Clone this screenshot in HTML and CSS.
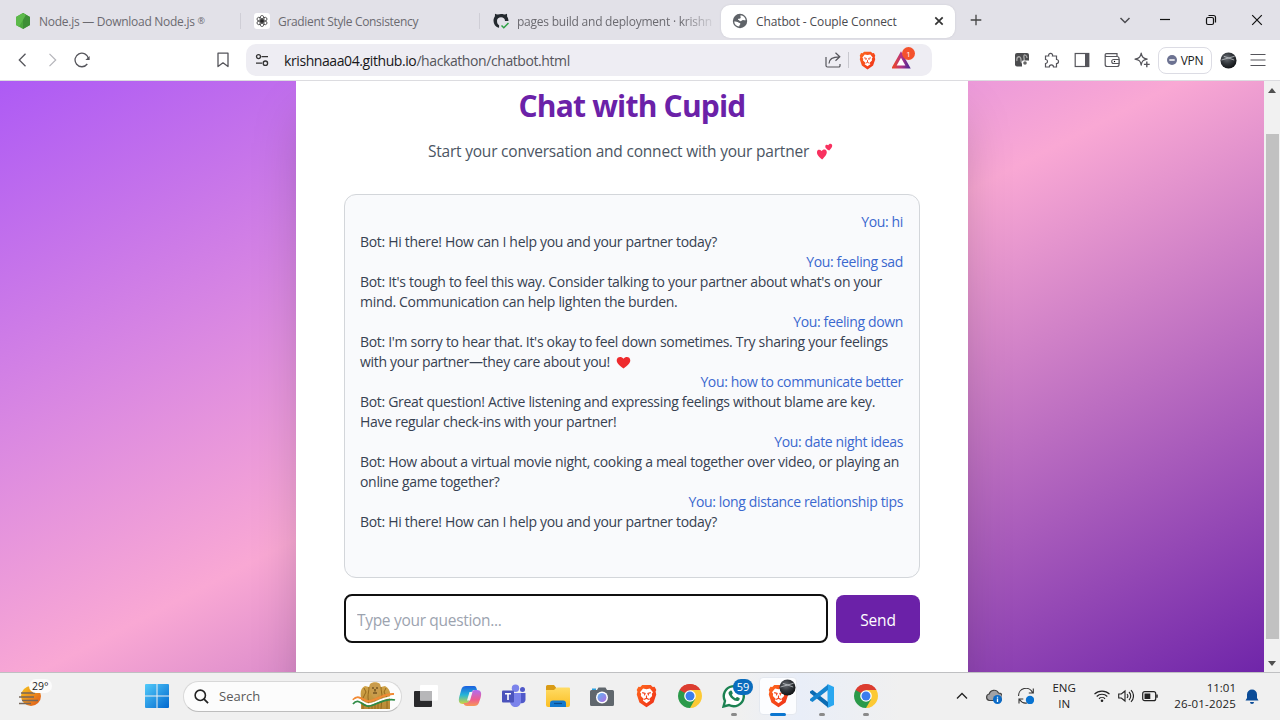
FILE: index.html
```
<!DOCTYPE html>
<html lang="en">
<head>
<meta charset="utf-8">
<title>Chatbot - Couple Connect</title>
<link rel="stylesheet" href="styles.css">
</head>
<body>
<svg class="defs" width="0" height="0" aria-hidden="true">
  <defs>
    <linearGradient id="fire" x1="0" y1="0" x2="1" y2="1"><stop offset="0" stop-color="#ff6a1f"/><stop offset="1" stop-color="#ee2d18"/></linearGradient>
    <linearGradient id="win" x1="0" y1="0" x2="1" y2="1"><stop offset="0" stop-color="#53cbfa"/><stop offset="1" stop-color="#0067cf"/></linearGradient>
    <linearGradient id="sun" x1="0" y1="0" x2="1" y2="1"><stop offset="0" stop-color="#f7c51e"/><stop offset="1" stop-color="#e0561a"/></linearGradient>
    <linearGradient id="cpA" x1="0" y1="0" x2="0" y2="1"><stop offset="0" stop-color="#1b5fe0"/><stop offset=".5" stop-color="#25b6d8"/><stop offset="1" stop-color="#d3d63a"/></linearGradient>
    <linearGradient id="cpB" x1="0" y1="0" x2="0" y2="1"><stop offset="0" stop-color="#b06cf0"/><stop offset=".6" stop-color="#ee5d8f"/><stop offset="1" stop-color="#f79a55"/></linearGradient>
    <linearGradient id="folder" x1="0" y1="0" x2="0" y2="1"><stop offset="0" stop-color="#ffdc65"/><stop offset="1" stop-color="#fbbf24"/></linearGradient>
    <linearGradient id="gold" x1="0" y1="0" x2="0" y2="1"><stop offset="0" stop-color="#d5a84c"/><stop offset="1" stop-color="#b88a35"/></linearGradient>
    <linearGradient id="tri" x1="0" y1="0" x2="1" y2="0"><stop offset="0" stop-color="#e8442e"/><stop offset=".55" stop-color="#b0338a"/><stop offset="1" stop-color="#5b2a92"/></linearGradient>
    <linearGradient id="lens" x1="0" y1="0" x2="1" y2="1"><stop offset="0" stop-color="#5fb6f2"/><stop offset="1" stop-color="#b06be0"/></linearGradient>
    <radialGradient id="orb" cx=".4" cy=".35" r=".7"><stop offset="0" stop-color="#6c7177"/><stop offset=".5" stop-color="#33373c"/><stop offset="1" stop-color="#0d0f11"/></radialGradient>
    <symbol id="brave" viewBox="0 0 22 25">
      <path d="M6.500 1h9l2 2 2-.3 1.800 3.600-.8 1.600.7 3.100-2.800 8.200L11 24.300l-7.400-5.100L.8 11l.7-3.100L.7 6.300 2.500 2.700l2 .3z" fill="url(#fire)"/>
      <path d="M11 5.300l3.600-.7 3.200 4-1.200 1.600.3 2.200-3.100 3.200 1 1.700L11 20l-3.800-2.700 1-1.700-3.100-3.200.3-2.200-1.200-1.600 3.200-4z" fill="#fff"/>
      <path d="M6.500 9l3 .7-.7 2.200M15.500 9l-3 .7.7 2.200M11 12v3M8.500 16.200l2.500-1.400 2.500 1.400" fill="none" stroke="#f2421b" stroke-width="1.200"/>
    </symbol>
    <symbol id="chrome" viewBox="0 0 24 24">
      <path d="M12 12L1.610 6A12 12 0 0 1 22.390 6z" fill="#dc3d30"/>
      <path d="M12 12L22.390 6A12 12 0 0 1 12 24z" fill="#fcc934"/>
      <path d="M12 12L12 24A12 12 0 0 1 1.610 6z" fill="#2b9a4a"/>
      <path d="M12 6h10.390L17.200 15z" fill="#fcc934"/>
      <path d="M6.800 15L1.610 6 12 6z" fill="#2b9a4a"/>
      <path d="M17.200 15L12 24 6.800 15z" fill="#2b9a4a"/>
      <path d="M1.610 6A12 12 0 0 1 22.390 6H12L6.800 9z" fill="#dc3d30"/>
      <circle cx="12" cy="12" r="5.800" fill="#fff"/><circle cx="12" cy="12" r="4.500" fill="#3b7ded"/>
    </symbol>
    <symbol id="orbit" viewBox="0 0 18 18">
      <circle cx="9" cy="9" r="8.500" fill="url(#orb)"/>
      <path d="M1.500 8.500L15.500 4.500M4 4.500l11 4" stroke="#c4c8cc" stroke-width=".8" fill="none"/>
    </symbol>
  </defs>
</svg>

<header class="tabs">
  <div class="tab">
    <svg class="fav" viewBox="0 0 16 16"><path d="M8 0l7 4v8l-7 4-7-4V4z" fill="#4aa63c"/><path d="M8 0l7 4v8l-7 4z" fill="#3d8f36"/><path d="M11 1.700L4 13.700 1 12V4l7-4z" fill="#5cb94a"/></svg>
    <span class="tab-text t-node">Node.js — Download Node.js <span class="reg">®</span></span>
  </div>
  <div class="tab divided">
    <svg class="fav" viewBox="0 0 16 16"><rect width="16" height="16" rx="3" fill="#fff"/><g fill="none" stroke="#222" stroke-width=".7"><ellipse cx="8" cy="5.600" rx="2" ry="3.200"/><ellipse cx="8" cy="5.600" rx="2" ry="3.200" transform="rotate(60 8 8)"/><ellipse cx="8" cy="5.600" rx="2" ry="3.200" transform="rotate(120 8 8)"/><ellipse cx="8" cy="5.600" rx="2" ry="3.200" transform="rotate(180 8 8)"/><ellipse cx="8" cy="5.600" rx="2" ry="3.200" transform="rotate(240 8 8)"/><ellipse cx="8" cy="5.600" rx="2" ry="3.200" transform="rotate(300 8 8)"/></g></svg>
    <span class="tab-text t-grad">Gradient Style Consistency</span>
  </div>
  <div class="tab divided">
    <svg class="fav" viewBox="0 0 16 16"><path d="M8 1C3.600 1 .5 3.800.5 7.700c0 3.300 2 6 5 7.100.4.100.6-.2.600-.5v-2c-1.200-.2-2.100-2-2.100-4.500C4 5.500 5.800 4.300 8 4.300s4 1.200 4 3.700h3.500C15.500 3.700 12.400 1 8 1z" fill="#24292f"/><path d="M1.800 5.500L2 .8l4 1.500zM14.200 5.500L14 .8l-4 1.500z" fill="#24292f"/><path d="M2.500 11c1.500.3 1.500 1.500 3 1.500" stroke="#24292f" stroke-width="1.300" fill="none"/><path d="M8.500 12.500l2.300 2.300 4.700-4.800" fill="none" stroke="#2da044" stroke-width="1.500"/></svg>
    <span class="tab-text faded">pages build and deployment · krishn</span>
  </div>
  <div class="tab active">
    <svg class="fav" viewBox="0 0 16 16"><circle cx="8" cy="8" r="7.200" fill="#5f6368"/><path d="M8.700 2.200c2.600.2 4.700 2.300 5 5-1 .4-1.600-.2-2.600-.2-1.500.1-1.500 1.300-2.800 1.300-.8-.2-.8-1.300-1.800-1.400-.6-.1-.8-.8-.1-1.200 1.200-.3 2.200-.2 2.300-1.300-.1-.9-.5-1.500 0-2.200zM2.200 8.500c1.500 0 3.200.2 4.200 1.100.7.700 1.800.3 2 1.200.1.900-1.100 1.100-1.200 2.800-2.800-.2-4.900-2.300-5-5.100z" fill="#fff"/></svg>
    <span class="tab-text">Chatbot - Couple Connect</span>
    <svg class="tab-close" viewBox="0 0 10 10"><path d="M1.300 1.300l7.400 7.400M8.700 1.300L1.300 8.700" stroke="#333" stroke-width="1.700"/></svg>
  </div>
  <svg class="plus" viewBox="0 0 12 12"><path d="M6 .7v10.600M.7 6h10.600" stroke="#444" stroke-width="1.300"/></svg>
  <div class="window-buttons">
    <svg viewBox="0 0 14 14"><path d="M2.500 5l4.500 4.500L11.500 5" fill="none" stroke="#4c4c50" stroke-width="1.500"/></svg>
    <svg viewBox="0 0 14 14"><path d="M2 6.500h10" stroke="#111" stroke-width="1.200"/></svg>
    <svg viewBox="0 0 14 14"><rect x="2.500" y="4.500" width="7" height="7" rx="1.500" fill="none" stroke="#111" stroke-width="1.200"/><path d="M4.500 2.500h5a2 2 0 0 1 2 2v5" fill="none" stroke="#111" stroke-width="1.200"/></svg>
    <svg viewBox="0 0 14 14"><path d="M2.200 2.200l9.600 9.600M11.800 2.200l-9.600 9.600" stroke="#111" stroke-width="1.200"/></svg>
  </div>
</header>

<nav class="toolbar">
  <div class="nav-left">
    <svg viewBox="0 0 16 16"><path d="M11.500 1.800L5.300 8l6.200 6.200" fill="none" stroke="#55555b" stroke-width="1.300"/></svg>
    <svg viewBox="0 0 16 16"><path d="M5.500 1.800L11.700 8l-6.200 6.200" fill="none" stroke="#b5b5ba" stroke-width="1.200"/></svg>
    <svg viewBox="0 0 16 16"><path d="M13.300 12A6.800 6.800 0 1 1 14.500 6.500" fill="none" stroke="#55555b" stroke-width="1.300"/><path d="M15.600 4v4h-4.200z" fill="#55555b"/></svg>
  </div>
  <svg class="bookmark" viewBox="0 0 16 16"><path d="M3 1.200h10v13.300L8 10.800l-5 3.700z" fill="none" stroke="#55555b" stroke-width="1.300" stroke-linejoin="round"/></svg>
  <div class="address">
    <svg class="tune" viewBox="0 0 14 14"><g fill="none" stroke="#333" stroke-width="1.300"><circle cx="3.500" cy="3.600" r="2"/><path d="M6.500 3.600H13M1 10.200h6.200"/><circle cx="10.400" cy="10.200" r="2.200"/></g></svg>
    <span class="url"><span class="host">krishnaaa04.github.io</span>/hackathon/chatbot.html</span>
    <svg class="share" viewBox="0 0 16 16"><path d="M1 5v8.500a1.500 1.500 0 0 0 1.500 1.500h11.300a1.200 1.200 0 0 0 1.200-1.200V12M4 11.500C4 7 7 4.800 14.500 4.800M10.500.8l4.300 4-4.300 4" fill="none" stroke="#55555b" stroke-width="1.200"/></svg>
    <span class="rule"></span>
    <svg class="shield" viewBox="0 0 22 25"><use href="#brave"/></svg>
    <span class="rewards"><svg viewBox="0 0 20 18"><path d="M9 3.500l7 12.500H2z" fill="#fff" stroke="url(#tri)" stroke-width="3.200"/></svg><b>1</b></span>
  </div>
  <div class="extensions">
    <svg viewBox="0 0 16 16"><rect x="1" y="1" width="14" height="13.500" rx="2" fill="#4b4c4e"/><path d="M3 9c-1-5 4-6 4-1s4 3 3-2 3-3 3 0" stroke="#aaa" stroke-width="1.300" fill="none"/><rect x="8" y="8.500" width="7.500" height="7" rx="1" fill="#fff"/><circle cx="11" cy="11" r="1.800" fill="#666"/></svg>
    <svg viewBox="0 0 16 16"><path d="M1.500 4h3.200a2 2 0 1 1 3.800 0h4v3.500a2 2 0 1 1 0 4V15H9.500a2.100 2.100 0 1 0-4.200 0H1.500v-3.500a2 2 0 1 0 0-4z" fill="none" stroke="#55555b" stroke-width="1.200"/></svg>
    <svg viewBox="0 0 16 16"><rect x="1.200" y="1.500" width="13.600" height="13" fill="none" stroke="#55555b" stroke-width="1.200"/><path d="M11 1.500h4v13h-4z" fill="#55555b"/></svg>
    <svg viewBox="0 0 16 16"><path d="M1.200 3.200v9.300a2 2 0 0 0 2 2h9.800a2 2 0 0 0 2-2v-6a2 2 0 0 0-2-2H2.500a1.400 1.400 0 0 1 0-2.800H13V4.500" fill="none" stroke="#55555b" stroke-width="1.200"/><path d="M15 7.500H9.700a2 2 0 0 0 0 4H15z" fill="#fff" stroke="#55555b" stroke-width="1.100"/><circle cx="10.500" cy="9.500" r=".7"/></svg>
    <svg viewBox="0 0 16 16"><path d="M7.200 1.200c.7 3.800 1.800 5 6 5.900-4.200.8-5.300 2-6 6-.7-4-1.800-5.200-6.200-6 4.400-.9 5.500-2.100 6.200-5.900z" fill="none" stroke="#55555b" stroke-width="1.200" stroke-linejoin="round"/><path d="M12.800 9.500v5.800M9.900 12.400h5.800" stroke="#55555b" stroke-width="1.400"/></svg>
  </div>
  <div class="vpn"><svg viewBox="0 0 10 10"><circle cx="5" cy="5" r="5" fill="#6c7291"/><path d="M2.300 5h5.400" stroke="#fff" stroke-width="1.500"/></svg><span>VPN</span></div>
  <svg class="profile" viewBox="0 0 18 18"><use href="#orbit"/></svg>
  <svg class="menu" viewBox="0 0 16 16"><path d="M.5 2.500h15M.5 8h15M.5 13.500h15" stroke="#55555b" stroke-width="1.200"/></svg>
</nav>

<div class="viewport">
  <main class="page">
    <section class="card">
      <h1><span>Chat with Cupid</span></h1>
      <p class="lead"><span>Start your conversation and connect with your partner</span><svg viewBox="0 0 18 18"><path d="M6.500 17.500C3 14.500.300 12 1.200 8.800c.8-2 3.300-2 4.600-.2 1.300-1.800 4-2.500 5.300-.4 1.300 3.300-1.600 6-4.600 9.300z" fill="#f8315f"/><path d="M14 8c-2.500-1.200-4.500-2.700-4.200-4.800.4-1.500 2.200-1.800 3.200-.7.500-1.600 2.700-2.400 3.800-.9C18 3.500 16 6 14 8z" fill="#f8315f"/></svg></p>
      <div class="chat">
        <p class="you">You: hi</p>
        <p class="bot">Bot: Hi there! How can I help you and your partner today?</p>
        <p class="you">You: feeling sad</p>
        <p class="bot">Bot: It's tough to feel this way. Consider talking to your partner about what's on your<br>mind. Communication can help lighten the burden.</p>
        <p class="you">You: feeling down</p>
        <p class="bot">Bot: I'm sorry to hear that. It's okay to feel down sometimes. Try sharing your feelings<br>with your partner—they care about you!<svg viewBox="0 0 16 14"><path d="M8 13.500C4 10.500.7 8 .7 4.500.7.600 5.800-.300 8 2.900c2.200-3.200 7.300-2.300 7.300 1.600 0 3.500-3.300 6-7.300 9z" fill="#ee2b2e"/></svg></p>
        <p class="you">You: how to communicate better</p>
        <p class="bot">Bot: Great question! Active listening and expressing feelings without blame are key.<br>Have regular check-ins with your partner!</p>
        <p class="you">You: date night ideas</p>
        <p class="bot">Bot: How about a virtual movie night, cooking a meal together over video, or playing an<br>online game together?</p>
        <p class="you">You: long distance relationship tips</p>
        <p class="bot">Bot: Hi there! How can I help you and your partner today?</p>
      </div>
      <form class="composer">
        <input type="text" placeholder="Type your question...">
        <button type="button">Send</button>
      </form>
    </section>
  </main>
  <aside class="scrollbar">
    <svg viewBox="0 0 8 5"><path d="M4 0l4 5H0z" fill="#505050"/></svg>
    <div class="thumb"></div>
    <svg viewBox="0 0 8 5"><path d="M4 5L0 0h8z" fill="#505050"/></svg>
  </aside>
</div>

<footer class="taskbar">
  <div class="weather">
    <svg viewBox="0 0 24 22"><circle cx="12" cy="11" r="10" fill="url(#sun)"/><path d="M2 8h14M0 12h15M3 15.500h16M0 18.500h12" stroke="#77675a" stroke-width="1.500"/></svg>
    <span>29°</span>
  </div>
  <svg class="start" viewBox="0 0 24 24"><path d="M0 1a1 1 0 0 1 1-1h10.500v11.500H0zM12.500 0H23a1 1 0 0 1 1 1v10.500H12.500zM0 12.500h11.500V24H1a1 1 0 0 1-1-1zM12.500 12.500H24V23a1 1 0 0 1-1 1H12.500z" fill="url(#win)"/></svg>
  <div class="search">
    <svg class="glass" viewBox="0 0 16 16"><circle cx="6.700" cy="6.700" r="5.500" fill="none" stroke="#222" stroke-width="1.700"/><path d="M10.700 10.700l4.300 4.300" stroke="#222" stroke-width="1.900"/></svg>
    <span>Search</span>
    <svg class="emblem" viewBox="0 0 44 28"><path d="M9 27V15c-1-5 0-9 4-11l4 1 1-3c2-2.500 8-2.500 10 0l1 3 4-1c4 2 6 6 5 11v12z" fill="url(#gold)"/><path d="M17 5c0 4-1 6-1 10l1 12M29 5c0 4 1 6 1 10l-1 12M12 6l2 4-3 6v11M34 6l-2 4 3 6v11M20 18v9M26 18v9M23 17v10" fill="none" stroke="#96691d" stroke-width="1"/><path d="M18 3c0 6 1 12 5 13 4-1 5-7 5-13-2-3-8-3-10 0z" fill="#c99c4c"/><path d="M20 6h2M24 6h2M21 11h4M23 7v2.500" stroke="#4d330d" stroke-width="1.100"/><path d="M1 18c5-6 8-1 14 1s16-8 27-7" fill="none" stroke="#f28a35" stroke-width="2"/><path d="M1 20c5-6 8 0 14 2s16-8 28-7" fill="none" stroke="#fff" stroke-width="2"/><path d="M1 22c5-6 8 0 14 2s16-9 28-6" fill="none" stroke="#2f8b46" stroke-width="1.800"/></svg>
  </div>
  <div class="apps">
    <span class="app"><svg viewBox="0 0 24 24"><rect x="0" y="7" width="18" height="16" rx="1" fill="#29292b"/><rect x="6" y="1" width="18" height="15.500" rx="1" fill="#fff"/><path d="M6 7h12v9.500H6z" fill="#b7b7b9"/></svg></span>
    <span class="app"><svg viewBox="0 0 24 24"><path d="M8 2h8c2 0 2.500 2 3 4h-2c-3 0-3.500 2-4 4l-2 7c-.5 2-1.500 3-3 3H5C1 20 0 17 1.500 12l2-7C4.200 3 5.500 2 8 2z" fill="url(#cpA)"/><path d="M16 22H9c-2 0-3-1-3.500-3H8c2 0 3-1.500 3.500-3.500l2-6.500c.6-2 1.500-3 3.500-3h2c4 0 5 3 3.500 8l-1.700 5c-.8 2-2 3-4.800 3z" fill="url(#cpB)"/><path d="M11.500 8h3l-2.500 8.500H9z" fill="#f1f1f2"/></svg></span>
    <span class="app"><svg viewBox="0 0 24 24"><circle cx="20.500" cy="5.500" r="2.500" fill="#5059c9"/><circle cx="13.500" cy="4.200" r="3.700" fill="#7b83eb"/><path d="M17 9h6.500v6.500c0 3-2.500 4.500-5.500 3.500z" fill="#5059c9"/><path d="M8 9h11v8c0 8-11 8-11 0z" fill="#7b83eb"/><rect x="0" y="6.500" width="12" height="12" rx="1" fill="#4b53bc"/><path d="M3 9.700h6M6 9.700v6.300" stroke="#fff" stroke-width="1.600"/></svg></span>
    <span class="app"><svg viewBox="0 0 24 24"><path d="M0 2.500A1.500 1.500 0 0 1 1.500 1H8l2 2.500V8H0z" fill="#d99b15"/><path d="M0 6h8l2.500-2.500H23a1 1 0 0 1 1 1V21a2 2 0 0 1-2 2H2a2 2 0 0 1-2-2z" fill="url(#folder)"/><path d="M4 23v-3.500a3 3 0 0 1 3-3h10a3 3 0 0 1 3 3V23z" fill="#1379ce"/><path d="M8 19.500h8" stroke="#0a4c8d" stroke-width="1.200"/></svg></span>
    <span class="app"><svg viewBox="0 0 24 24"><path d="M7 6l1.500-2.500h7L17 6h5.500A1.500 1.500 0 0 1 24 7.500v13a1.500 1.500 0 0 1-1.500 1.500h-21A1.500 1.500 0 0 1 0 20.500v-13A1.500 1.500 0 0 1 1.500 6z" fill="#60676d"/><path d="M2 4.500h4V6H2z" fill="#28a0df"/><circle cx="12" cy="13.500" r="6" fill="#fff"/><circle cx="12" cy="13.500" r="4.500" fill="url(#lens)"/></svg></span>
    <span class="app"><svg class="lion" viewBox="0 0 22 25"><use href="#brave"/></svg></span>
    <span class="app"><svg viewBox="0 0 24 24"><use href="#chrome"/></svg></span>
    <span class="app running"><svg viewBox="0 0 24 24"><path d="M1.500 22.500L3 17A10 10 0 1 1 7 21z" fill="#fff" stroke="#1c8252" stroke-width="2.400"/><path d="M8 7c1-.7 1.700-.5 2 .3l.7 1.700c.2.800-.7 1.300-.9 1.800.8 1.600 2 2.700 3.700 3.400.7-.4 1-1.500 1.700-1.300l2.300 1c.5.400.1 2.300-1 2.900-3.200 1.500-9-3-10-7.500C6.400 8.500 7 7.500 8 7z" fill="#1c8252"/></svg><b class="count">59</b></span>
    <span class="app current running"><svg class="lion" viewBox="0 0 22 25"><use href="#brave"/></svg><svg class="overlay" viewBox="0 0 18 18"><use href="#orbit"/></svg></span>
    <span class="app running"><svg viewBox="0 0 24 24"><path d="M17.500 0L24 3v18l-6.500 3z" fill="#2aa7f0"/><path d="M0 7.500L2.500 6 18 18v5.500L0 9z" fill="#0a6bb3"/><path d="M0 16.500L2.500 18 18 6V.5L0 15z" fill="#1584cf"/></svg></span>
    <span class="app running"><svg viewBox="0 0 24 24"><use href="#chrome"/></svg></span>
  </div>
  <div class="tray">
    <svg viewBox="0 0 16 16"><path d="M3 10.500L8 5.500l5 5" fill="none" stroke="#222" stroke-width="1.300"/></svg>
    <svg viewBox="0 0 16 16"><path d="M3.500 12.500a3.300 3.300 0 0 1-.3-6.500A5 5 0 0 1 12.500 5a4 4 0 0 1 2 7.500z" fill="#a2a2a5" stroke="#444" stroke-width="1.200"/><circle cx="11.500" cy="11.500" r="4.500" fill="#0b6bc7"/><path d="M11.500 8.700v1.100M11.500 10.600v3.400" stroke="#fff" stroke-width="1.300"/></svg>
    <svg viewBox="0 0 16 16"><path d="M.6 8A7.300 7.300 0 0 1 14.500 4.500M15.300.5V5h-4.500M9 15c-3 .6-5.500-.7-7.400-3.300M1 15.500V11h4.300" fill="none" stroke="#333" stroke-width="1.100"/><circle cx="12" cy="12" r="4.200" fill="#0873d1"/></svg>
    <span class="lang">ENG<br>IN</span>
    <svg viewBox="0 0 16 16"><path d="M.5 6.200a10.500 10.500 0 0 1 15 0M2.700 8.500a7.400 7.400 0 0 1 10.600 0M5 10.700a4.300 4.300 0 0 1 6 0" fill="none" stroke="#222" stroke-width="1.200"/><circle cx="8" cy="12.800" r="1.300" fill="#222"/></svg>
    <svg viewBox="0 0 16 16"><path d="M.7 6v4h2.600L7 13V3L3.300 6zM9 6a3 3 0 0 1 0 4M11 4a5.500 5.500 0 0 1 0 8M13 2.200a8 8 0 0 1 0 11.600" fill="none" stroke="#222" stroke-width="1.100"/></svg>
    <svg viewBox="0 0 16 16"><rect x=".7" y="3.700" width="13" height="9" rx="2" fill="none" stroke="#222" stroke-width="1.200"/><rect x="2.500" y="5.500" width="5.800" height="5.500" fill="#222"/><path d="M15 6.500v3.300" stroke="#222" stroke-width="1.500"/></svg>
    <span class="clock">11:01<br><span class="date">26-01-2025</span></span>
    <svg class="bell" viewBox="0 0 16 16"><path d="M1.500 12.500L3 10V6.500a5 5 0 0 1 10 0V10l1.500 2.500z" fill="#0b4c98"/><path d="M6 14a2 2 0 0 0 4 0z" fill="#0b4c98"/></svg>
  </div>
</footer>
</body>
</html>
```
FILE: styles.css
```
* { box-sizing: border-box; }
body {
  margin: 0; width: 1280px; height: 720px; overflow: hidden;
  display: grid; grid-template-rows: 40px 41px 591px 48px;
  font-family: "Open Sans", "Noto Sans", sans-serif;
  background: #fff; color: #222;
}
svg { display: block; flex: none; }
.defs { position: absolute; }
p, h1 { margin: 0; }

.tabs { display: flex; align-items: center; background: #e2e1e8; }
.tab { width: 240px; height: 33px; display: flex; align-items: center; padding-left: 15px; gap: 8px; margin-top: 2px; }
.divided { width: 239px; border-left: 1px solid #cfced6; height: 16px; padding-left: 13px; }
.divided + .divided { width: 242px; }
.fav { width: 16px; height: 16px; }
.tab-text { font-size: 12px; color: #6b6a70; white-space: nowrap; letter-spacing: -.12px; }
.t-node { letter-spacing: -.27px; }
.t-grad { letter-spacing: -.33px; }
.reg { font-size: 9px; vertical-align: 2px; }
.faded { letter-spacing: -.23px; mask-image: linear-gradient(90deg, #000 84%, rgba(0, 0, 0, .15)); }
.active { width: 234px; background: #fff; border-radius: 9px; padding: 0 11px; box-shadow: 0 0 2px #c9c8d0; }
.active .tab-text { color: #4a4a4f; }
.tab-close { width: 10px; height: 10px; margin-left: auto; }
.plus { width: 12px; height: 12px; margin-left: 15px; }
.window-buttons { display: flex; margin-left: auto; padding-right: 16px; }
.window-buttons svg { width: 14px; height: 14px; margin-left: 32px; }
.window-buttons svg:nth-child(2) { margin-left: 26px; }

.toolbar { display: flex; align-items: center; border-bottom: 1px solid #dcdce0; background: #fff; padding-left: 14px; }
.nav-left { display: flex; gap: 14px; }
.nav-left svg, .bookmark { width: 16px; height: 16px; }
.bookmark { margin-left: 125px; }
.address { width: 686px; height: 32px; margin-left: 15px; border-radius: 10px; background: #eeedf3; display: flex; align-items: center; padding-left: 9px; }
.tune { width: 14px; height: 14px; }
.url { font-size: 14px; margin-left: 15px; color: #55555b; width: 532px; white-space: nowrap; letter-spacing: -.41px; margin-right: 9px; }
.host { color: #17171a; }
.share { width: 16px; height: 16px; }
.rule { width: 1px; height: 16px; background: #c8c8cf; margin: 0 10px 0 7px; }
.shield { width: 17px; height: 19px; }
.rewards { position: relative; margin-left: 16px; }
.rewards svg { width: 20px; height: 18px; }
.rewards b { position: absolute; left: 10px; top: -4px; width: 13px; height: 13px; border-radius: 7px; background: #f4512c; color: #fff; font: 8px/13px "Open Sans", sans-serif; text-align: center; }
.extensions { display: flex; gap: 14px; margin-left: 82px; }
.extensions svg, .menu { width: 16px; height: 16px; }
.vpn { display: flex; align-items: center; justify-content: center; gap: 4px; width: 54px; height: 27px; margin-left: 8px; border: 1px solid #dcdce4; border-radius: 8px; font-size: 12px; letter-spacing: -.3px; }
.vpn svg { width: 10px; height: 10px; }
.profile { width: 17px; height: 17px; margin: 0 13px 0 8px; }

.viewport { display: flex; overflow: hidden; }
.page {
  width: 1264px; display: flex; justify-content: center;
  background: linear-gradient(to bottom right, #a855f7, #f9a8d4, #6b21a8) 0 -43px / 1264px 654px no-repeat;
}
.card { width: 672px; background: #fff; padding: 5px 48px 0; box-shadow: 0 25px 50px -12px rgba(0, 0, 0, .25); height: 620px; }
h1 { font-size: 30px; line-height: 40px; font-weight: 700; color: #6b21a8; text-align: center; letter-spacing: -.8px; }
.lead { display: flex; justify-content: center; align-items: center; gap: 7px; margin-top: 13px; height: 24px; font-size: 15.500px; color: #4b5563; white-space: nowrap; letter-spacing: -.21px; padding-right: 3px; }
.lead svg { width: 17px; height: 17px; }
.chat { height: 384px; margin-top: 31px; padding: 17px 16px 0 15px; border: 1px solid #d3d6da; border-radius: 12px; background: #f9fafc; font-size: 14px; line-height: 20px; white-space: nowrap; letter-spacing: -.31px; }
.you { text-align: right; color: #3b68cf; letter-spacing: -.36px; }
.bot { color: #374151; }
.bot svg { display: inline-block; width: 15px; height: 13px; margin-left: 6px; vertical-align: -2px; }
.composer { display: flex; gap: 8px; margin-top: 16px; align-items: center; }
.composer input { width: 484px; height: 49px; border: 2px solid #101010; border-radius: 8px; background: #fff; padding: 2px 11px 0; font: 15.500px "Open Sans", sans-serif; letter-spacing: -.31px; outline: 0; }
.composer input::placeholder { color: #9ca3af; }
.composer button { width: 84px; height: 48px; border: 0; border-radius: 8px; background: #6b21a8; color: #fff; font: 15.500px "Open Sans", sans-serif; padding: 2px 0 0; letter-spacing: -.2px; }
.scrollbar { width: 16px; background: #f1f1f1; display: flex; flex-direction: column; align-items: center; padding: 7px 0 6px; }
.scrollbar svg { width: 8px; height: 5px; }
.thumb { width: 13px; height: 505px; margin: 41px 0 auto; background: #c1c1c1; }

.taskbar { display: flex; align-items: center; background: linear-gradient(90deg, #f0f0f0 0 740px, #e9eef8 800px, #f0f0f0 900px); border-top: 1px solid #bfc0c2; padding-bottom: 1px; }
.weather { position: relative; width: 145px; padding-left: 19px; }
.weather svg { width: 24px; height: 22px; }
.weather span { position: absolute; left: 29px; top: -6px; padding: 0 3px; border-radius: 8px; background: #fbfbfb; font-size: 10.500px; line-height: 14px; }
.start { width: 24px; height: 24px; }
.search { display: flex; align-items: center; width: 219px; height: 31px; margin-left: 14px; padding: 0 5px 0 10px; border: 1px solid #d8d8d8; border-bottom-color: #bdbdbd; border-radius: 16px; background: #fcfcfc; }
.glass { width: 15px; height: 15px; }
.search span { margin-left: 10px; font-size: 13px; color: #5a5a5a; }
.emblem { width: 44px; height: 28px; margin-left: auto; }
.apps { display: flex; margin-left: 2px; }
.app { position: relative; width: 44px; height: 46px; display: flex; align-items: center; justify-content: center; }
.app svg { width: 24px; height: 24px; }
.app .lion { width: 21px; height: 24px; }
.current::before { content: ""; position: absolute; inset: 4px 3px 4px; border-radius: 4px; background: #fcfdff; border: 1px solid #e4e8ef; }
.app.current .lion { position: relative; }
.running::after { content: ""; position: absolute; left: 19px; bottom: 3px; width: 6px; height: 3px; border-radius: 2px; background: #8a8a8a; }
.current::after { left: 14px; width: 16px; background: #0b76d0; }
.app .overlay { position: absolute; left: 23px; top: 6px; width: 17px; height: 17px; }
.count { position: absolute; left: 21px; top: 6px; width: 20px; height: 16px; border-radius: 8px; background: #0a6cbd; color: #fff; font: 11px/16px "Open Sans", sans-serif; text-align: center; }
.tray { display: flex; align-items: center; margin-left: auto; padding-right: 20px; font-size: 11.500px; line-height: 16px; color: #222; white-space: nowrap; }
.tray svg { width: 16px; height: 16px; margin-right: 16px; }
.lang { width: 26px; text-align: center; margin: 0 17px 0 1px; }
.lang + svg, .lang + svg + svg { margin-right: 8px; }
.clock { text-align: right; }
.date { letter-spacing: .18px; }
.tray .bell { margin: 0 0 0 8px; }
```
